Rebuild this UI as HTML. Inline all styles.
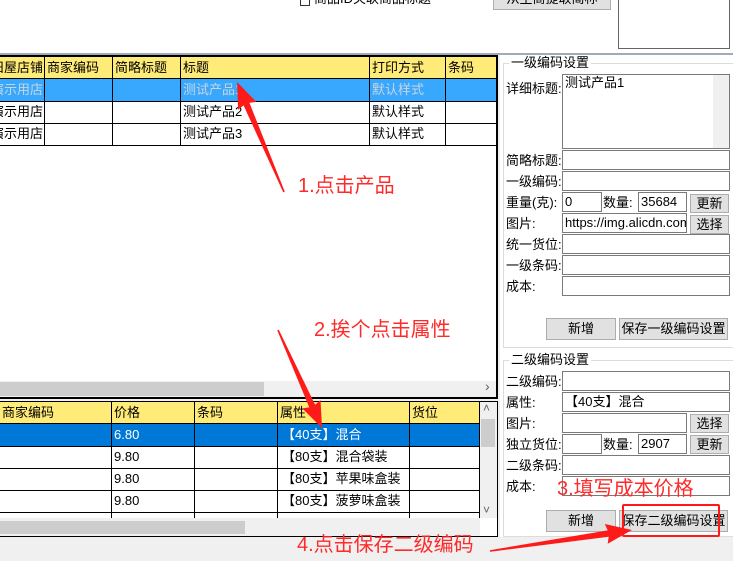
<!DOCTYPE html>
<html><head><meta charset="utf-8"><style>
*{box-sizing:border-box;margin:0;padding:0}
body{width:733px;height:561px;overflow:hidden;background:#f0f0f0;font-family:"Liberation Sans","Noto Sans CJK SC",sans-serif;font-size:13px;color:#000;position:relative}
.a{position:absolute}
.inp{position:absolute;background:#fff;border:1px solid #7a7a7a;height:20px;line-height:18px;padding-left:2px;font-size:13px;overflow:hidden;white-space:nowrap}
.btn{position:absolute;background:#e1e1e1;border:1px solid #adadad;text-align:center;font-size:13px;line-height:20px}
.lb{position:absolute;left:506px;font-size:13px;line-height:21px}
.red{position:absolute;color:#ff2a2a;font-size:20px;white-space:nowrap;font-family:"Liberation Sans","Noto Sans CJK SC",sans-serif}
</style></head><body>
<div class="a" style="left:0;top:0;width:733px;height:53px;background:#fff"></div>
<div class="a" style="left:0;top:53px;width:733px;height:2px;background:#a0aab8"></div>
<div class="a" style="left:300px;top:-4px;width:10px;height:10px;border:1px solid #333;background:#fff"></div>
<div class="a" style="left:314px;top:-8px;line-height:14px;font-size:13px">商品ID关联商品标题</div>
<div class="btn" style="left:493px;top:-12px;width:118px;height:22px">从生商提取简称</div>
<div class="a" style="left:618px;top:-2px;width:112px;height:51px;border:1px solid #666;background:#fff"></div>

<div class="a" style="left:0;top:55px;width:498px;height:344px;background:#fff;border:2px solid #000;border-left:none"></div>
<div class="a" style="left:0;top:57px;width:496px;height:22px;background:#ffeb78;border-bottom:1px solid #000"></div>
<div class="a" style="left:0;top:79px;width:496px;height:22px;background:#38a8ff"></div>
<div class="a" style="left:0;top:101px;width:496px;height:1px;background:#000"></div>
<div class="a" style="left:0;top:123px;width:496px;height:1px;background:#000"></div>
<div class="a" style="left:0;top:145px;width:496px;height:1px;background:#000"></div>
<div class="a" style="left:44px;top:57px;width:1px;height:89px;background:#000"></div>
<div class="a" style="left:112px;top:57px;width:1px;height:89px;background:#000"></div>
<div class="a" style="left:180px;top:57px;width:1px;height:89px;background:#000"></div>
<div class="a" style="left:369px;top:57px;width:1px;height:89px;background:#000"></div>
<div class="a" style="left:445px;top:57px;width:1px;height:89px;background:#000"></div>
<div class="a" style="left:0;top:57px;line-height:22px;white-space:nowrap">
<span class="a" style="left:-9px">旧屋店铺</span><span class="a" style="left:47px">商家编码</span><span class="a" style="left:115px">简略标题</span><span class="a" style="left:183px">标题</span><span class="a" style="left:372px">打印方式</span><span class="a" style="left:448px">条码</span>
<span class="a" style="left:-9px;top:22px;color:#c8d4e0">演示用店</span><span class="a" style="left:183px;top:22px;color:#c8d4e0">测试产品1</span><span class="a" style="left:372px;top:22px;color:#c8d4e0">默认样式</span>
<span class="a" style="left:-9px;top:44px">演示用店</span><span class="a" style="left:183px;top:44px">测试产品2</span><span class="a" style="left:372px;top:44px">默认样式</span>
<span class="a" style="left:-9px;top:66px">演示用店</span><span class="a" style="left:183px;top:66px">测试产品3</span><span class="a" style="left:372px;top:66px">默认样式</span>
</div>
<div class="a" style="left:0;top:381px;width:496px;height:16px;background:#f0f0f0"></div>
<div class="a" style="left:0;top:382px;width:264px;height:14px;background:#cdcdcd"></div>
<div class="a" style="left:485px;top:378px;color:#606060;font-size:14px">›</div>

<div class="a" style="left:0;top:401px;width:498px;height:136px;background:#fff;border:1px solid #000;border-left:none"></div>
<div class="a" style="left:0;top:402px;width:480px;height:22px;background:#ffeb78;border-bottom:1px solid #000"></div>
<div class="a" style="left:0;top:424px;width:480px;height:22px;background:#0078d7"></div>
<div class="a" style="left:0;top:446px;width:480px;height:1px;background:#000"></div>
<div class="a" style="left:0;top:468px;width:480px;height:1px;background:#000"></div>
<div class="a" style="left:0;top:490px;width:480px;height:1px;background:#000"></div>
<div class="a" style="left:0;top:512px;width:480px;height:1px;background:#000"></div>
<div class="a" style="left:111px;top:402px;width:1px;height:116px;background:#000"></div>
<div class="a" style="left:194px;top:402px;width:1px;height:116px;background:#000"></div>
<div class="a" style="left:277px;top:402px;width:1px;height:116px;background:#000"></div>
<div class="a" style="left:409px;top:402px;width:1px;height:116px;background:#000"></div>
<div class="a" style="left:479px;top:402px;width:1px;height:116px;background:#000"></div>
<div class="a" style="left:0;top:402px;line-height:22px;white-space:nowrap">
<span class="a" style="left:2px">商家编码</span><span class="a" style="left:114px">价格</span><span class="a" style="left:197px">条码</span><span class="a" style="left:280px">属性</span><span class="a" style="left:412px">货位</span>
<span class="a" style="left:114px;top:22px;color:#fff">6.80</span><span class="a" style="left:282px;top:22px;color:#fff">【40支】混合</span>
<span class="a" style="left:114px;top:44px">9.80</span><span class="a" style="left:282px;top:44px">【80支】混合袋装</span>
<span class="a" style="left:114px;top:66px">9.80</span><span class="a" style="left:282px;top:66px">【80支】苹果味盒装</span>
<span class="a" style="left:114px;top:88px">9.80</span><span class="a" style="left:282px;top:88px">【80支】菠萝味盒装</span>
</div>
<div class="a" style="left:480px;top:402px;width:17px;height:116px;background:#f0f0f0"></div>
<div class="a" style="left:481px;top:419px;width:14px;height:28px;background:#cdcdcd"></div>
<div class="a" style="left:0;top:518px;width:480px;height:18px;background:#f0f0f0"></div>
<div class="a" style="left:0;top:521px;width:245px;height:13px;background:#cdcdcd"></div>
<div class="a" style="left:483px;top:401px;font-size:12px;color:#606060">˄</div>
<div class="a" style="left:483px;top:503px;font-size:12px;color:#606060">˅</div>

<div class="a" style="left:500px;top:55px;width:233px;height:482px;background:#fff"></div>
<div class="a" style="left:503px;top:63px;width:230px;height:285px;border:1px solid #dcdcdc;border-right:none"></div>
<div class="a" style="left:509px;top:55px;background:#fff;padding:0 2px;line-height:16px">一级编码设置</div>
<div class="lb" style="top:78px">详细标题:</div>
<div class="inp" style="left:562px;top:74px;width:168px;height:75px;line-height:16px">测试产品1</div>
<div class="a" style="left:713px;top:75px;width:16px;height:73px;background:#f0f0f0"></div>
<div class="lb" style="top:150px">简略标题:</div><div class="inp" style="left:562px;top:150px;width:168px"></div>
<div class="lb" style="top:171px">一级编码:</div><div class="inp" style="left:562px;top:171px;width:168px"></div>
<div class="lb" style="top:192px">重量(克):</div><div class="inp" style="left:562px;top:192px;width:40px">0</div>
<div class="a" style="left:603px;top:192px;line-height:21px">数量:</div><div class="inp" style="left:638px;top:192px;width:49px">35684</div>
<div class="btn" style="left:690px;top:194px;width:39px;height:19px;line-height:17px">更新</div>
<div class="lb" style="top:213px">图片:</div><div class="inp" style="left:562px;top:213px;width:125px">https://img.alicdn.com</div>
<div class="btn" style="left:690px;top:215px;width:39px;height:19px;line-height:17px">选择</div>
<div class="lb" style="top:234px">统一货位:</div><div class="inp" style="left:562px;top:234px;width:168px"></div>
<div class="lb" style="top:255px">一级条码:</div><div class="inp" style="left:562px;top:255px;width:168px"></div>
<div class="lb" style="top:276px">成本:</div><div class="inp" style="left:562px;top:276px;width:168px"></div>
<div class="btn" style="left:546px;top:318px;width:70px;height:22px">新增</div>
<div class="btn" style="left:619px;top:318px;width:109px;height:22px">保存一级编码设置</div>

<div class="a" style="left:503px;top:360px;width:230px;height:177px;border:1px solid #dcdcdc;border-right:none"></div>
<div class="a" style="left:509px;top:352px;background:#fff;padding:0 2px;line-height:16px">二级编码设置</div>
<div class="lb" style="top:371px">二级编码:</div><div class="inp" style="left:562px;top:371px;width:168px"></div>
<div class="lb" style="top:392px">属性:</div><div class="inp" style="left:562px;top:392px;width:168px">【40支】混合</div>
<div class="lb" style="top:413px">图片:</div><div class="inp" style="left:562px;top:413px;width:125px"></div>
<div class="btn" style="left:690px;top:414px;width:39px;height:19px;line-height:17px">选择</div>
<div class="lb" style="top:434px">独立货位:</div><div class="inp" style="left:562px;top:434px;width:40px"></div>
<div class="a" style="left:603px;top:434px;line-height:21px">数量:</div><div class="inp" style="left:638px;top:434px;width:49px">2907</div>
<div class="btn" style="left:690px;top:435px;width:39px;height:19px;line-height:17px">更新</div>
<div class="lb" style="top:455px">二级条码:</div><div class="inp" style="left:562px;top:455px;width:168px"></div>
<div class="lb" style="top:476px">成本:</div><div class="inp" style="left:562px;top:476px;width:168px"></div>
<div class="btn" style="left:546px;top:510px;width:70px;height:22px">新增</div>
<div class="btn" style="left:619px;top:510px;width:109px;height:22px">保存二级编码设置</div>
<div class="a" style="left:622px;top:504px;width:98px;height:33px;border:2px solid #ff1a1a;border-radius:2px"></div>

<div class="red" style="left:298px;top:169px">1.点击产品</div>
<div class="red" style="left:314px;top:313px">2.挨个点击属性</div>
<div class="red" style="left:557px;top:472px">3.填写成本价格</div>
<div class="red" style="left:297px;top:528px">4.点击保存二级编码</div>

<svg class="a" style="left:0;top:0" width="733" height="561">
<g fill="#ff1a1a">
<polygon transform="translate(284,192) rotate(-113.1)" points="0,-0.8 95.6,-3.2 93.6,-10 119.6,0 93.6,10 95.6,3.2 0,0.8"/>
<polygon transform="translate(278,330) rotate(65.8)" points="0,-0.8 83.4,-3.2 81.4,-10 107.4,0 81.4,10 83.4,3.2 0,0.8"/>
<polygon transform="translate(490,551) rotate(-8.4)" points="0,-0.8 119.5,-3.2 117.5,-10 143.5,0 117.5,10 119.5,3.2 0,0.8"/>
</g>
</svg>
</body></html>
